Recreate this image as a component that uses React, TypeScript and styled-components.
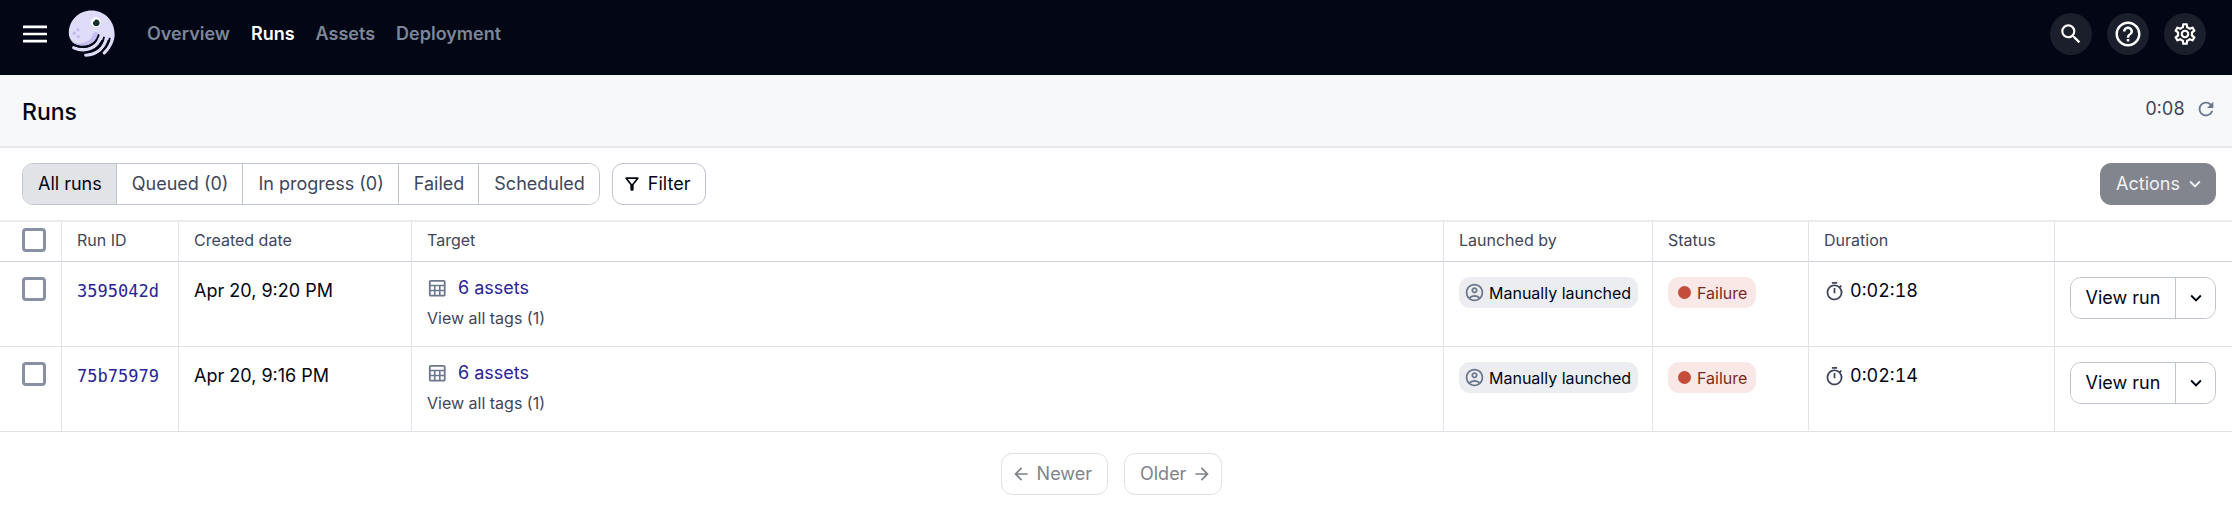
import React from 'react';
import styled, { createGlobalStyle, css } from 'styled-components';
import {
  MdArrowBack,
  MdArrowForward,
  MdExpandMore,
  MdHelpOutline,
  MdOutlineAccountCircle,
  MdOutlineFilterAlt,
  MdOutlineSettings,
  MdOutlineTimer,
  MdRefresh,
  MdSearch,
} from 'react-icons/md';

const color = {
  ink: '#030615',
  text: '#3f465a',
  icon: '#6b778c',
  link: '#2b2396',
  border: '#bfc5d0',
  line: '#e2e4e9',
};

const Global = createGlobalStyle`
  *, *::before, *::after { box-sizing: border-box; }
  body { margin: 0; background: #fff; color: ${color.ink}; font-family: Inter, sans-serif; font-size: 18px; line-height: 28px; }
  button, input { font: inherit; color: inherit; margin: 0; }
  a { text-decoration: none; color: inherit; }
  svg { display: block; flex: none; }
`;

const TopBar = styled.header`
  display: flex;
  align-items: center;
  height: 75px;
  padding: 0 26px 7px 22px;
  background: ${color.ink};
`;

const MenuButton = styled.button`
  padding: 0;
  border: 0;
  background: none;
  color: #fff;
  cursor: pointer;
`;

const LogoLink = styled.a`
  margin: 0 31px 0 20px;
`;

const Nav = styled.nav`
  display: flex;
  gap: 21px;
`;

const NavLink = styled.a<{ $active?: boolean }>`
  font-weight: 600;
  color: ${(p) => (p.$active ? '#fff' : '#7b8697')};
`;

const TopActions = styled.div`
  display: flex;
  gap: 15px;
  margin-left: auto;
`;

const RoundButton = styled.button`
  display: grid;
  place-items: center;
  width: 42px;
  height: 42px;
  padding: 0;
  border: 0;
  border-radius: 50%;
  background: #1b1e2b;
  color: #fff;
  cursor: pointer;
`;

const PageHeader = styled.div`
  display: flex;
  align-items: center;
  justify-content: space-between;
  height: 73px;
  padding: 0 15px 0 22px;
  border-bottom: 2px solid #e6e8ec;
  background: #f7f8fa;
`;

const Title = styled.h1`
  margin: 0;
  padding-top: 2px;
  font-size: 23px;
  line-height: 28px;
  font-weight: 500;
`;

const Refresh = styled.div`
  display: flex;
  align-items: center;
  gap: 10px;
  padding-bottom: 3px;
  color: ${color.text};
  font-variant-numeric: tabular-nums;
`;

const IconButton = styled.button`
  padding: 0;
  border: 0;
  background: none;
  color: ${color.icon};
  cursor: pointer;
`;

const Toolbar = styled.div`
  display: flex;
  gap: 12px;
  padding: 15px 16px 15px 22px;
`;

const outlined = css`
  height: 42px;
  border: 1px solid ${color.border};
  border-radius: 11px;
`;

const TabGroup = styled.div`
  display: flex;
  ${outlined}
  overflow: hidden;
`;

const Tab = styled.button<{ $active?: boolean }>`
  padding: 0 14px 0 15px;
  border: 0;
  background: ${(p) => (p.$active ? '#e1e3e7' : '#fff')};
  color: ${(p) => (p.$active ? color.ink : color.text)};
  cursor: pointer;
  & + & { border-left: 1px solid ${color.border}; }
`;

const Button = styled.button<{ $icon: 'start' | 'end'; $kind?: 'filled' | 'faded' }>`
  display: flex;
  align-items: center;
  gap: 6px;
  ${outlined}
  padding: ${(p) => (p.$icon === 'start' ? '0 15px 0 9px' : '0 9px 0 15px')};
  background: #fff;
  cursor: pointer;
  ${(p) => p.$kind === 'filled' && css`
    margin-left: auto;
    gap: 4px;
    border-color: #82858d;
    background: #82858d;
    color: #f0f1f3;
  `}
  ${(p) => p.$kind === 'faded' && css`
    border-color: #dfe1e7;
    color: #81838a;
  `}
`;

const Table = styled.table`
  width: 100%;
  table-layout: fixed;
  border-collapse: separate;
  border-spacing: 0;
  border-top: 2px solid #ececf0;
`;

const Column = styled.col<{ $width?: number }>`
  width: ${(p) => (p.$width ? `${p.$width}px` : 'auto')};
`;

const HeadCell = styled.th`
  height: 40px;
  padding: 0 15px 3px;
  border-right: 1px solid ${color.line};
  border-bottom: 1px solid #cfd2dc;
  text-align: left;
  font-size: 16px;
  line-height: 20px;
  font-weight: 400;
  color: ${color.text};
  &:first-child { padding: 0 0 3px 22px; }
  &:last-child { border-right: 0; }
`;

const Cell = styled.td`
  height: 85px;
  padding: 15px 0 0 15px;
  border-right: 1px solid ${color.line};
  border-bottom: 1px solid #dfe1e7;
  vertical-align: top;
  white-space: nowrap;
  &:first-child { padding-left: 22px; }
  &:last-child { border-right: 0; padding-right: 16px; }
`;

const Checkbox = styled.input`
  display: block;
  appearance: none;
  width: 24px;
  height: 24px;
  border: 3px solid #8791a3;
  border-radius: 4px;
  background: #fff;
  &:checked { background: #4f43dd; }
`;

const RunLink = styled.a`
  display: block;
  font-family: 'DejaVu Sans Mono', monospace;
  font-size: 17px;
  color: ${color.link};
`;

const Assets = styled.div`
  display: flex;
  align-items: center;
  gap: 11px;
  line-height: 22px;
  color: ${color.icon};
`;

const AssetLink = styled.a`
  color: ${color.link};
`;

const TagsButton = styled.button`
  display: block;
  margin-top: 9px;
  padding: 0;
  border: 0;
  background: none;
  font-size: 16px;
  line-height: 20px;
  color: ${color.text};
  cursor: pointer;
`;

const Badge = styled.span<{ $tone?: 'danger' }>`
  display: flex;
  align-items: center;
  width: fit-content;
  gap: ${(p) => (p.$tone ? '6px' : '4px')};
  height: 31px;
  padding: ${(p) => (p.$tone ? '0 9px 0 10px' : '0 7px 0 5px')};
  border-radius: 11px;
  background: ${(p) => (p.$tone ? '#f9e8e6' : '#ecedf1')};
  color: ${(p) => (p.$tone ? '#7b2a24' : color.ink)};
  font-size: 16px;
  line-height: 20px;
  svg { color: ${color.icon}; }
`;

const Dot = styled.span`
  width: 13px;
  height: 13px;
  border-radius: 50%;
  background: #c34c3b;
`;

const Duration = styled.div`
  display: flex;
  align-items: center;
  gap: 5px;
  font-variant-numeric: tabular-nums;
  svg { color: ${color.text}; }
`;

const SplitButton = styled.div`
  display: flex;
  ${outlined}
  overflow: hidden;
`;

const SplitPart = styled.button<{ $main?: boolean }>`
  display: grid;
  place-items: center;
  flex: ${(p) => (p.$main ? '1' : '0 0 40px')};
  padding: 0;
  border: 0;
  background: #fff;
  cursor: pointer;
  & + & { border-left: 1px solid ${color.border}; }
`;

const Pager = styled.nav`
  display: flex;
  justify-content: center;
  gap: 16px;
  padding: 21px 9px 16px 0;
`;

const MenuIcon = () => (
  <svg width="26" height="26" viewBox="0 0 26 26" fill="currentColor" aria-hidden="true">
    <rect x="1" y="4.600" width="24" height="2.600" rx=".5" />
    <rect x="1" y="11.700" width="24" height="2.600" rx=".5" />
    <rect x="1" y="18.800" width="24" height="2.600" rx=".5" />
  </svg>
);

const Logo = () => (
  <svg width="48" height="48" viewBox="0 0 48 48" fill="none" strokeLinecap="round" aria-hidden="true">
    <path d="M.8 23C.8 10 11 .4 23.500.4S46.600 10 46.600 24L46 30H28c-4 4-8 5.600-13 5.600C7 35.600.8 31 .8 23z" fill="#dedcf9" />
    <path d="M3.500 31.500C12 36 23 32 24.500 25c.8-4 6.500-4 5.500 0-2 7-7 10.600-15 10.600-5 0-9-1.500-11.500-4.100z" fill="#c3bdf3" />
    <g stroke="#dedcf9" strokeWidth="3.400">
      <path d="M5.800 37.700C17 42.500 29 39 33.300 26" />
      <path d="M17.800 45C29 44.500 36.500 38 38.800 27" />
      <path d="M36.300 42.700C41 38 44.300 33 44.700 26" />
    </g>
    <g stroke="#030615" strokeWidth="1.800">
      <path d="M5 35C16 39.500 27.500 36 30.700 25" />
      <path d="M14.500 42.800C26 43 33.500 37 36 27.500" />
      <path d="M30 44.500C36 41 40 35.500 41.700 28.500" />
    </g>
    <circle cx="27.800" cy="12.300" r="5" fill="#fff" />
    <path d="M25.300 14.500c-.8-2 .2-3.200 1.200-3.200 0-1.300 1.200-2 2.400-1.700 1.900.4 3.100 2.200 2.700 4-.2 1-.7 1.900-1.500 2.200-1.800.6-4.200.2-4.800-1.300z" fill="#12302c" />
    <circle cx="9.900" cy="19.700" r="1.700" fill="#c3bdf3" />
    <circle cx="6.300" cy="23.300" r="1.700" fill="#c3bdf3" />
    <circle cx="10.200" cy="26.800" r="1.700" fill="#c3bdf3" />
  </svg>
);

const TableIcon = () => (
  <svg width="20" height="20" viewBox="0 0 20 20" fill="none" stroke="currentColor" aria-hidden="true">
    <rect x="2.800" y="2.800" width="14.900" height="14.900" rx="1" strokeWidth="1.800" />
    <path d="M2.500 7.500H18M2.500 12.500H18M7.700 7.500v10M12.800 7.500v10" strokeWidth="1.600" />
  </svg>
);

const runs = [
  { id: '3595042d', created: 'Apr 20, 9:20 PM', duration: '0:02:18' },
  { id: '75b75979', created: 'Apr 20, 9:16 PM', duration: '0:02:14' },
];
const sections = ['Overview', 'Runs', 'Assets', 'Deployment'];
const tabs = ['All runs', 'Queued (0)', 'In progress (0)', 'Failed', 'Scheduled'];
const headings = ['Run ID', 'Created date', 'Target', 'Launched by', 'Status', 'Duration', ''];
const widths = [62, 117, 233, undefined, 209, 156, 246, 177];

export default function App() {
  return (
    <>
      <Global />
      <TopBar>
        <MenuButton aria-label="Menu"><MenuIcon /></MenuButton>
        <LogoLink href="#" aria-label="Home"><Logo /></LogoLink>
        <Nav>
          {sections.map((name) => (
            <NavLink key={name} href="#" $active={name === 'Runs'}>{name}</NavLink>
          ))}
        </Nav>
        <TopActions>
          <RoundButton aria-label="Search"><MdSearch size={26} /></RoundButton>
          <RoundButton aria-label="Help"><MdHelpOutline size={30} /></RoundButton>
          <RoundButton aria-label="Settings"><MdOutlineSettings size={26} /></RoundButton>
        </TopActions>
      </TopBar>
      <PageHeader>
        <Title>Runs</Title>
        <Refresh>
          0:08
          <IconButton aria-label="Refresh"><MdRefresh size={22} /></IconButton>
        </Refresh>
      </PageHeader>
      <Toolbar>
        <TabGroup>
          {tabs.map((label, i) => <Tab key={label} $active={i === 0}>{label}</Tab>)}
        </TabGroup>
        <Button $icon="start"><MdOutlineFilterAlt size={20} />Filter</Button>
        <Button $icon="end" $kind="filled">Actions<MdExpandMore size={22} /></Button>
      </Toolbar>
      <Table>
        <colgroup>{widths.map((w, i) => <Column key={i} $width={w} />)}</colgroup>
        <thead>
          <tr>
            <HeadCell><Checkbox type="checkbox" aria-label="Select all runs" /></HeadCell>
            {headings.map((h) => <HeadCell key={h}>{h}</HeadCell>)}
          </tr>
        </thead>
        <tbody>
          {runs.map((run) => (
            <tr key={run.id}>
              <Cell><Checkbox type="checkbox" aria-label={`Select run ${run.id}`} /></Cell>
              <Cell><RunLink href="#">{run.id}</RunLink></Cell>
              <Cell>{run.created}</Cell>
              <Cell>
                <Assets><TableIcon /><AssetLink href="#">6 assets</AssetLink></Assets>
                <TagsButton>View all tags (1)</TagsButton>
              </Cell>
              <Cell><Badge><MdOutlineAccountCircle size={21} />Manually launched</Badge></Cell>
              <Cell><Badge $tone="danger"><Dot />Failure</Badge></Cell>
              <Cell><Duration><MdOutlineTimer size={21} />{run.duration}</Duration></Cell>
              <Cell>
                <SplitButton>
                  <SplitPart $main>View run</SplitPart>
                  <SplitPart aria-label="More actions"><MdExpandMore size={22} /></SplitPart>
                </SplitButton>
              </Cell>
            </tr>
          ))}
        </tbody>
      </Table>
      <Pager aria-label="Pagination">
        <Button $icon="start" $kind="faded"><MdArrowBack size={20} />Newer</Button>
        <Button $icon="end" $kind="faded">Older<MdArrowForward size={20} /></Button>
      </Pager>
    </>
  );
}
